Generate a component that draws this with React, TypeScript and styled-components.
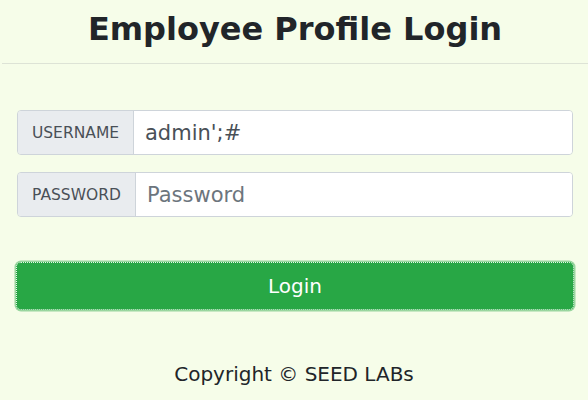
import React from "react";
import styled, { createGlobalStyle } from "styled-components";

const GlobalStyle = createGlobalStyle`
  html, body {
    margin: 0;
    padding: 0;
    background: #f6fde9;
  }
  body {
    font-family: "DejaVu Sans", "Liberation Sans", sans-serif;
    color: #212529;
  }
`;

const Page = styled.div`
  width: 588px;
  height: 400px;
  display: flex;
  flex-direction: column;
  box-sizing: border-box;
`;

const Title = styled.h1`
  margin: 0 0 0 2px;
  padding-top: 9px;
  height: 64px;
  box-sizing: border-box;
  text-align: center;
  font-size: 32px;
  font-weight: bold;
  line-height: 40px;
  color: #212529;
  border-bottom: 1px solid #dde3d6;
`;

const Form = styled.form`
  display: flex;
  flex-direction: column;
  padding: 46px 15px 0 17px;
  gap: 17px;
`;

const Group = styled.div`
  display: flex;
  height: 45px;
  border: 1px solid #ced4da;
  border-radius: 4px;
  overflow: hidden;
  box-sizing: border-box;
`;

const Addon = styled.span<{ $w: number }>`
  width: ${(p) => p.$w}px;
  flex: none;
  display: flex;
  align-items: center;
  justify-content: center;
  background: #e9ecef;
  border-right: 1px solid #ced4da;
  font-size: 15.5px;
  color: #495057;
`;

const Field = styled.input`
  flex: 1;
  border: none;
  outline: none;
  background: #fff;
  padding: 0 11px;
  font-family: "DejaVu Sans", sans-serif;
  font-size: 21px;
  color: #495057;
  &::placeholder {
    color: #6c757d;
  }
`;

const Button = styled.button`
  margin: 45px 14px 0 16px;
  height: 48px;
  background: #28a745;
  color: #fff;
  border: 1px dotted #e8f5ea;
  border-radius: 5px;
  box-shadow: 0 0 0 1.5px rgba(40, 167, 69, 0.45);
  font-family: "DejaVu Sans", sans-serif;
  font-size: 20px;
`;

const Footer = styled.p`
  margin: 52px 0 0;
  text-align: center;
  font-size: 20px;
  color: #212529;
`;

export default function App() {
  return (
    <Page>
      <GlobalStyle />
      <Title>Employee Profile Login</Title>
      <Form onSubmit={(e) => e.preventDefault()}>
        <Group>
          <Addon $w={115}>USERNAME</Addon>
          <Field type="text" defaultValue="admin';#" />
        </Group>
        <Group>
          <Addon $w={117}>PASSWORD</Addon>
          <Field type="password" placeholder="Password" />
        </Group>
      </Form>
      <Button type="button">Login</Button>
      <Footer>Copyright © SEED LABs</Footer>
    </Page>
  );
}
